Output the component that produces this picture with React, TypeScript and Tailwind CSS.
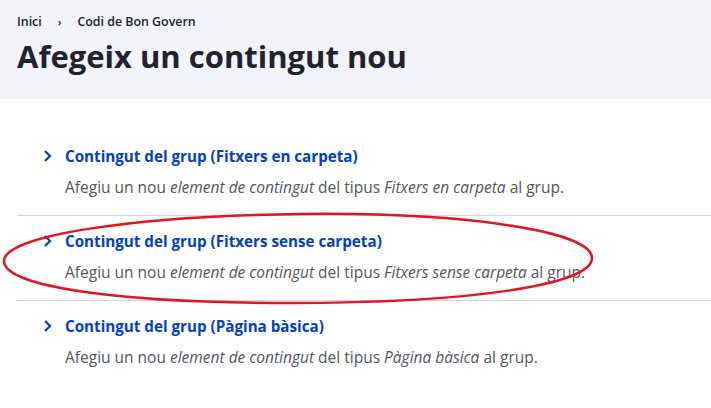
const items = [
  { label: 'Fitxers en carpeta' },
  { label: 'Fitxers sense carpeta' },
  { label: 'Pàgina bàsica' },
]

const Chevron = () => (
  <svg width="9" height="14" viewBox="0 0 9 14" className="shrink-0">
    <polyline points="2,2 7,7 2,12" fill="none" stroke="#003ecc" strokeWidth="2.2" />
  </svg>
)

const App = () => {
  return (
    <div className="relative w-[711px] h-[408px] bg-white overflow-hidden font-['Open_Sans',sans-serif]">
      <div className="bg-[#f3f4f9] h-[99px] px-[17px] pt-[13px]">
        <div className="flex items-center text-[12.4px] font-semibold text-[#222330] leading-[18px]">
          <span>Inici</span>
          <span className="mx-[16px] text-[11px]">›</span>
          <span>Codi de Bon Govern</span>
        </div>
        <h1 className="mt-[6px] text-[31px] font-bold leading-[38px] text-[#222330]">
          Afegeix un contingut nou
        </h1>
      </div>

      <div className="pt-[32px]">
        {items.map((item, i) => (
          <div
            key={item.label}
            className={`ml-[17px] pl-[26px] pt-[15px] pb-[18px] ${i > 0 ? 'border-t border-[#d3d4d9]' : ''}`}
          >
            <div className="flex items-center gap-[13px] h-[20px]">
              <Chevron />
              <span className="text-[15.2px] font-bold text-[#003ecc] leading-[20px]">
                Contingut del grup ({item.label})
              </span>
            </div>
            <p className="mt-[11px] ml-[22px] text-[15.5px] text-[#545560] leading-[20px]">
              Afegiu un nou <em>element de contingut</em> del tipus <em>{item.label}</em> al grup.
            </p>
          </div>
        ))}
      </div>

      <svg
        className="absolute left-0 top-0 pointer-events-none"
        width="711"
        height="408"
        viewBox="0 0 711 408"
      >
        <path
          d="M 300 214 C 470 212 592 232 592 258 C 592 285 470 303 290 303 C 120 303 4 287 4 261 C 4 236 130 216 300 214"
          fill="none"
          stroke="#e3141f"
          strokeWidth="2.5"
        />
      </svg>
    </div>
  )
}

export default App
